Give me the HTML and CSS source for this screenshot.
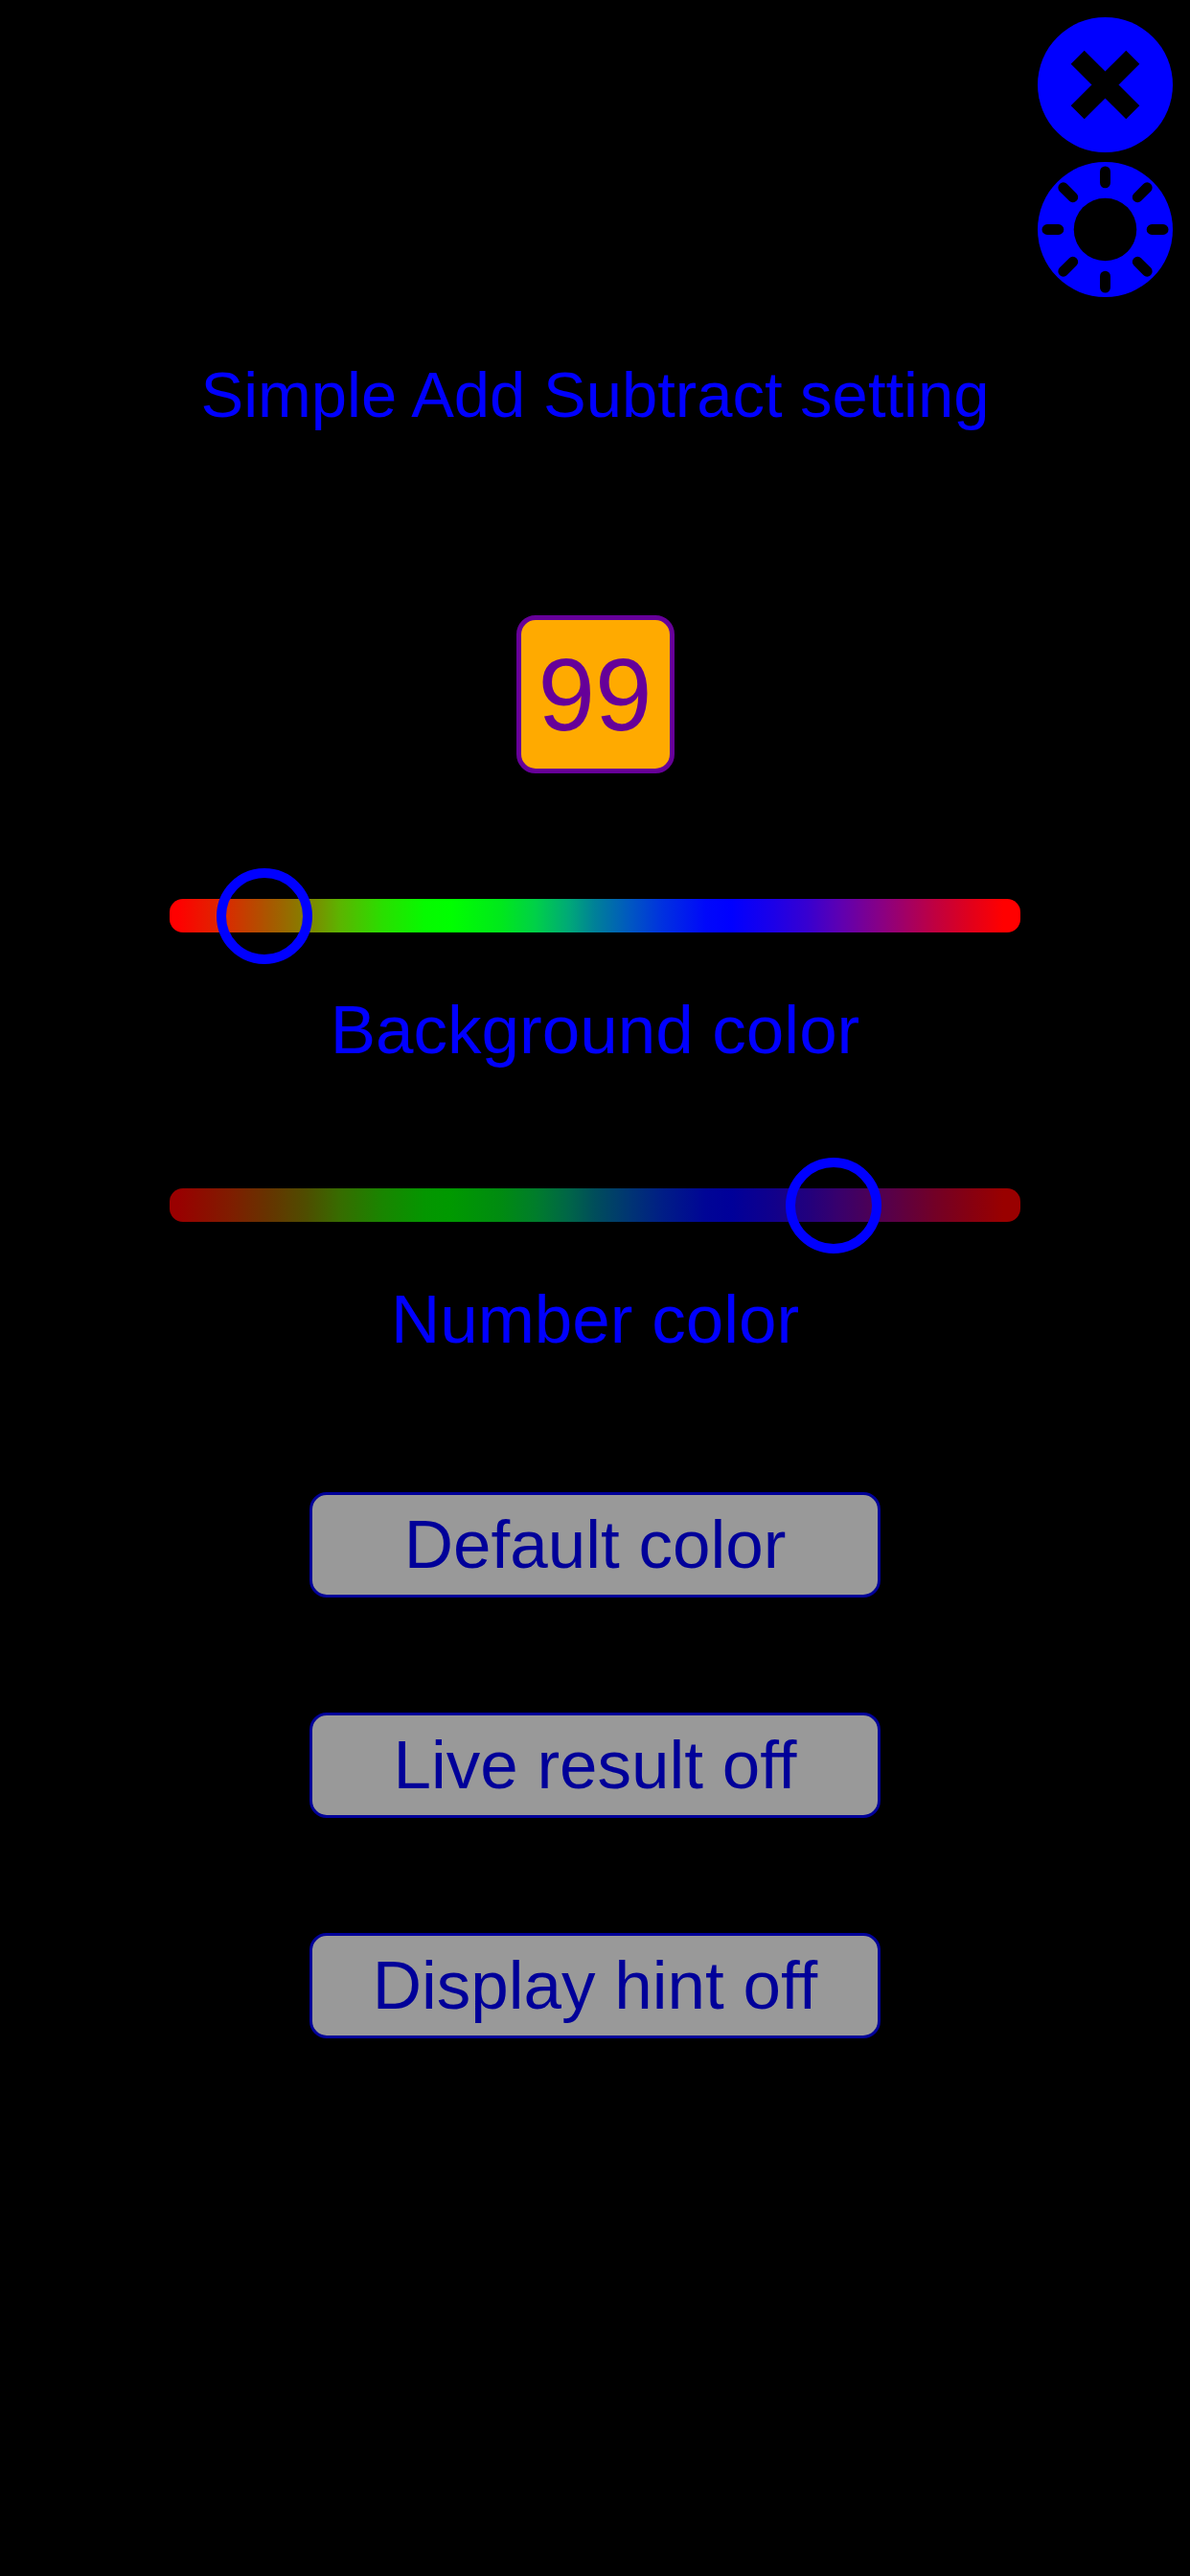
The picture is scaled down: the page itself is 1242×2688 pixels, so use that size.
FILE: index.html
```html
<!DOCTYPE html>
<html lang="en">
<head>
  <meta charset="UTF-8" />
  <meta name="viewport" content="width=device-width, initial-scale=1.0"/>
  <title>Simple Add Subtract setting</title>
  <link rel="stylesheet" href="styles.css">
</head>
<body>
  <header>
    <button class="icon-button" type="button" aria-label="Close">
      <svg viewBox="-71 -71 142 142">
        <circle class="icon-fill" r="71"/>
        <path class="icon-cross" d="M-29 -29L29 29M29 -29L-29 29"/>
      </svg>
    </button>
    <button class="icon-button" type="button" aria-label="Brightness">
      <svg viewBox="-71 -71 142 142">
        <circle class="icon-fill" r="71"/>
        <circle class="icon-hole" r="33"/>
        <path class="icon-ray" d="M0 -49V-61M0 49V61M-49 0H-61M49 0H61M-34 -34L-44 -44M34 -34L44 -44M-34 34L-44 44M34 34L44 44"/>
      </svg>
    </button>
  </header>

  <main>
    <h1>Simple Add Subtract setting</h1>

    <output class="preview" id="preview">99</output>

    <!-- Color sliders -->
    <div class="sliders">
      <div class="field">
        <input class="slider" id="backgroundColor" type="range" min="20" max="340" value="40" oninput="setBackground(this.value)">
        <label for="backgroundColor">Background color</label>
      </div>
      <div class="field">
        <input class="slider slider-dark" id="numberColor" type="range" min="20" max="340" value="281" oninput="setNumber(this.value)">
        <label for="numberColor">Number color</label>
      </div>
    </div>

    <!-- Options -->
    <div class="options">
      <button class="option" type="button" onclick="resetColors()">Default color</button>
      <button class="option" type="button" onclick="toggleOption(this, 'Live result')">Live result off</button>
      <button class="option" type="button" onclick="toggleOption(this, 'Display hint')">Display hint off</button>
    </div>
  </main>

  <script>
    const preview = document.getElementById('preview');

    function setBackground(hue) {
      preview.style.backgroundColor = `hsl(${hue}, 100%, 50%)`;
    }

    function setNumber(hue) {
      preview.style.color = `hsl(${hue}, 100%, 30%)`;
    }

    function resetColors() {
      document.getElementById('backgroundColor').value = 40;
      document.getElementById('numberColor').value = 281;
      preview.removeAttribute('style');
    }

    function toggleOption(button, name) {
      const isOff = button.innerText.endsWith('off');
      button.innerText = `${name} ${isOff ? 'on' : 'off'}`;
    }
  </script>
</body>
</html>
```
FILE: styles.css
```css
body {
  margin: 0;
  background-color: #000;
  color: #00f;
  font-family: Arial, "Liberation Sans", sans-serif;
}
header {
  display: flex;
  flex-direction: column;
  align-items: flex-end;
  gap: 10px;
  padding: 18px 18px 0;
}
.icon-button {
  width: 141px;
  height: 141px;
  padding: 0;
  border: none;
  border-radius: 50%;
  background: none;
  cursor: pointer;
}
.icon-button svg {
  display: block;
  width: 100%;
  height: 100%;
}
.icon-fill {
  fill: #00f;
}
.icon-hole {
  fill: #000;
}
.icon-cross {
  stroke: #000;
  stroke-width: 20;
}
.icon-ray {
  stroke: #000;
  stroke-width: 11;
  stroke-linecap: round;
}
main {
  display: flex;
  flex-direction: column;
  align-items: center;
  padding: 64px 40px;
}
h1 {
  margin: 0;
  font-size: 67px;
  font-weight: normal;
  line-height: 76px;
  text-align: center;
}
.preview {
  display: flex;
  justify-content: center;
  align-items: center;
  box-sizing: border-box;
  width: 165px;
  height: 165px;
  margin-top: 192px;
  border: 5px solid;
  border-radius: 20px;
  background-color: #fa0;
  color: #609;
  font-size: 107px;
  line-height: 120px;
}
.sliders {
  display: flex;
  flex-direction: column;
  gap: 92px;
  width: 100%;
  max-width: 888px;
  margin-top: 98px;
}
.field {
  display: flex;
  flex-direction: column;
  align-items: center;
  gap: 30px;
}
.field label {
  font-size: 71px;
  line-height: 80px;
}
.slider {
  -webkit-appearance: none;
  appearance: none;
  width: 100%;
  height: 100px;
  margin: 0;
  background: none;
  cursor: pointer;
}
.slider::-webkit-slider-runnable-track {
  height: 35px;
  border-radius: 14px;
  background: linear-gradient(to right,
    #f00 1%, #d62e00 7%, #a65a00 12%, #848000 16%, #5cb400 20%, #2ade00 25%, #06fa00 30%,
    #0f0 33%, #00e81c 39%, #00d048 43%, #00a878 47%, #008098 50%, #0058c0 54%, #0030e0 58%, #0008fa 63%,
    #00f 66%, #1c00e8 71%, #3800d0 75%, #6000b0 79%, #8c0080 84%, #c00040 90%, #e0001c 94%, #f00 98%);
}
.slider-dark::-webkit-slider-runnable-track {
  background: linear-gradient(to right,
    #900 1%, #801c00 7%, #643600 12%, #4f4d00 16%, #376c00 20%, #198500 25%, #049600 30%,
    #090 33%, #008b11 39%, #007d2b 43%, #006548 47%, #004d5b 50%, #003573 54%, #001d86 58%, #000596 63%,
    #009 66%, #11008b 71%, #22007d 75%, #3a006a 79%, #54004d 84%, #730026 90%, #860011 94%, #900 98%);
}
.slider::-webkit-slider-thumb {
  -webkit-appearance: none;
  box-sizing: border-box;
  width: 100px;
  height: 100px;
  margin-top: -32px;
  border: 10px solid #00f;
  border-radius: 50%;
  background: none;
}
.options {
  display: flex;
  flex-direction: column;
  gap: 120px;
  width: 100%;
  max-width: 596px;
  margin-top: 140px;
}
.option {
  height: 110px;
  padding: 0;
  border: 3px solid #009;
  border-radius: 18px;
  background-color: #999;
  color: #009;
  font-family: inherit;
  font-size: 71px;
  line-height: 80px;
  cursor: pointer;
}
```
